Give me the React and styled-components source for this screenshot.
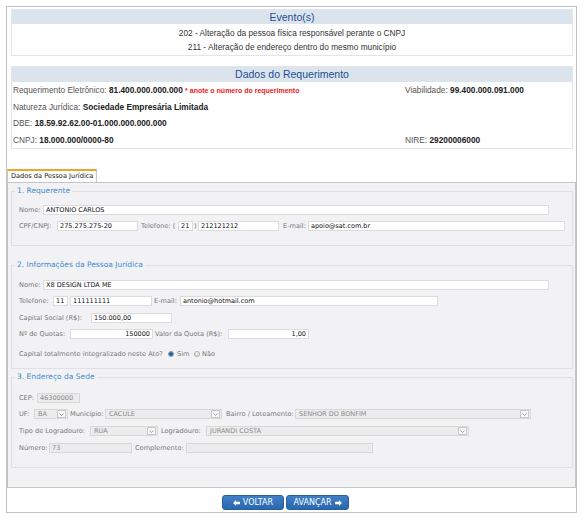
import React from 'react';
import styled, { createGlobalStyle } from 'styled-components';

const GlobalStyle = createGlobalStyle`
  html, body { margin: 0; padding: 0; background: #fff; }
  body { font-family: "Liberation Sans", Arial, sans-serif; }
  * { box-sizing: border-box; }
`;

const Frame = styled.div`
  margin: 6px 10px 0 6px;
  width: 571px;
  height: 507px;
  border: 1px solid #c2c2c2;
  display: flex;
  flex-direction: column;
`;

const Top = styled.div`
  padding: 2px 3px 0 4px;
`;

const InfoBox = styled.section`
  border: 1px solid #e0e6ec;
  background: #fff;
  margin-top: ${p => p.$mt || 0}px;
`;

const InfoHeader = styled.h2`
  margin: 0;
  height: ${p => p.$h || 14}px;
  line-height: ${p => p.$h || 14}px;
  background: #dbe4ed;
  color: #1f4f8d;
  font-size: 10.5px;
  font-weight: normal;
  text-align: center;
`;

const EventList = styled.div`
  padding: 2px 0 1px;
`;

const EventLine = styled.div`
  height: 14px;
  line-height: 14px;
  text-align: center;
  font-size: 8.3px;
  color: #333;
`;

const DataGrid = styled.div`
  display: grid;
  grid-template-columns: 392px 1fr;
  grid-auto-rows: 16.5px;
  align-items: center;
  padding-left: 1px;
`;

const DataCell = styled.div`
  font-size: 8.3px;
  color: #555;
  white-space: nowrap;
  b { color: #222; font-weight: bold; }
`;

const Warn = styled.span`
  color: #f01818;
  font-size: 7px;
  font-weight: bold;
`;

const Tabs = styled.div`
  display: flex;
  margin-top: 20px;
`;

const Tab = styled.div`
  height: 13px;
  padding: 0 3px;
  border: 1px solid #c8c8c8;
  border-bottom: none;
  border-top: 2px solid #f2a32c;
  background: #fff;
  font-family: "DejaVu Sans", Verdana, sans-serif;
  font-size: 6.6px;
  line-height: 10px;
  color: #222;
`;

const Panel = styled.div`
  border: 1px solid #c6c6c6;
  background: #f2f2f4;
  padding: 3px 2px 19px 3px;
  font-family: "DejaVu Sans", Verdana, sans-serif;
  font-size: 6.6px;
`;

const Fieldset = styled.fieldset`
  margin: ${p => p.$mt || 0}px 0 0 0;
  padding: ${p => p.$pt}px 7px ${p => p.$pb}px 7px;
  border: 1px solid #e0e0e2;
  min-width: 0;
`;

const Legend = styled.legend`
  margin-left: -4px;
  padding: 0 2px;
  height: 10px;
  line-height: 10px;
  font-size: 7.5px;
  color: #3d8bd2;
`;

const Row = styled.div`
  display: flex;
  align-items: center;
  height: 10px;
  margin-top: ${p => p.$mt || 0}px;
`;

const Label = styled.span`
  flex: none;
  width: ${p => (p.$w ? `${p.$w}px` : 'auto')};
  margin-left: ${p => p.$ml || 0}px;
  color: #777;
  white-space: nowrap;
`;

const Field = styled.input`
  width: ${p => p.$w}px;
  height: 10px;
  margin: 0 0 0 ${p => p.$ml || 0}px;
  padding: 0 2px;
  border: 1px solid ${p => (p.disabled ? '#d8d8d8' : '#dcdcdc')};
  border-radius: 0;
  background: ${p => (p.disabled ? '#ececec' : '#fff')};
  color: ${p => (p.disabled ? '#8a8a8a' : '#111')};
  font-family: "DejaVu Sans", Verdana, sans-serif;
  font-size: 6.5px;
  text-align: ${p => (p.$right ? 'right' : 'left')};
  outline: none;
  flex: none;
`;

const Select = styled.div`
  width: ${p => p.$w}px;
  height: 10px;
  flex: none;
  display: flex;
  align-items: center;
  justify-content: space-between;
  padding: 0 1px 0 3px;
  border: 1px solid #d8d8d8;
  background: #ececec;
  color: #8a8a8a;
  font-size: 6.5px;
`;

const SelectArrow = styled.span`
  width: 9px;
  height: 8px;
  border: 1px solid #c9c9c9;
  background: #f7f7f7;
  display: flex;
  align-items: center;
  justify-content: center;
`;

const Radio = styled.span`
  width: 6px;
  height: 6px;
  border-radius: 50%;
  border: 1px solid ${p => (p.$on ? '#7d8fa3' : '#a9a9a9')};
  background: ${p =>
    p.$on
      ? 'radial-gradient(circle, #17456f 0, #1f5f96 1.3px, #5c8fbe 2px, #dfe6ee 2.6px)'
      : 'linear-gradient(#f8f8f8, #dcdcdc)'};
  flex: none;
`;

const ButtonBar = styled.div`
  display: flex;
  justify-content: center;
  gap: 2px;
  padding: 7px 12px 0 0;
`;

const NavButton = styled.button`
  width: ${p => p.$w}px;
  height: 15px;
  padding: 0;
  display: flex;
  align-items: center;
  justify-content: center;
  gap: 3px;
  border: 1px solid #255f9e;
  border-radius: 3px;
  background: linear-gradient(#3f80c6, #2b67ad);
  color: #fff;
  font-family: "DejaVu Sans", Verdana, sans-serif;
  font-size: 8px;
  cursor: pointer;
`;

const Chevron = () => (
  <svg width="5" height="3" viewBox="0 0 5 3">
    <path d="M0.5 0.5 L2.5 2.5 L4.5 0.5" fill="none" stroke="#8c8c8c" strokeWidth="0.8" />
  </svg>
);

const ArrowLeft = () => (
  <svg width="7" height="6" viewBox="0 0 8 7">
    <path d="M0 3.5 L3.5 0 L3.5 2 L8 2 L8 5 L3.5 5 L3.5 7 Z" fill="#fff" />
  </svg>
);

const ArrowRight = () => (
  <svg width="7" height="6" viewBox="0 0 8 7">
    <path d="M8 3.5 L4.5 0 L4.5 2 L0 2 L0 5 L4.5 5 L4.5 7 Z" fill="#fff" />
  </svg>
);

const SelectBox = ({ w, value }) => (
  <Select $w={w}>
    <span>{value}</span>
    <SelectArrow>
      <Chevron />
    </SelectArrow>
  </Select>
);

export default function App() {
  return (
    <>
      <GlobalStyle />
      <Frame>
        <Top>
          <InfoBox>
            <InfoHeader>Evento(s)</InfoHeader>
            <EventList>
              <EventLine>202 - Alteração da pessoa física responsável perante o CNPJ</EventLine>
              <EventLine>211 - Alteração de endereço dentro do mesmo município</EventLine>
            </EventList>
          </InfoBox>
          <InfoBox $mt={10}>
            <InfoHeader $h={15}>Dados do Requerimento</InfoHeader>
            <DataGrid>
              <DataCell>
                Requerimento Eletrônico: <b>81.400.000.000.000</b>{' '}
                <Warn>* anote o número do requerimento</Warn>
              </DataCell>
              <DataCell>
                Viabilidade: <b>99.400.000.091.000</b>
              </DataCell>
              <DataCell>
                Natureza Jurídica: <b>Sociedade Empresária Limitada</b>
              </DataCell>
              <DataCell />
              <DataCell>
                DBE: <b>18.59.92.62.00-01.000.000.000.000</b>
              </DataCell>
              <DataCell />
              <DataCell>
                CNPJ: <b>18.000.000/0000-80</b>
              </DataCell>
              <DataCell>
                NIRE: <b>29200006000</b>
              </DataCell>
            </DataGrid>
          </InfoBox>
        </Top>

        <Tabs>
          <Tab>Dados da Pessoa Jurídica</Tab>
        </Tabs>

        <Panel>
          <Fieldset $pt={9} $pb={14}>
            <Legend>1. Requerente</Legend>
            <Row>
              <Label $w={24}>Nome:</Label>
              <Field $w={506} readOnly value="ANTONIO CARLOS" />
            </Row>
            <Row $mt={6}>
              <Label $w={38}>CPF/CNPJ:</Label>
              <Field $w={81} readOnly value="275.275.275-20" />
              <Label $ml={3} $w={37}>Telefone: (</Label>
              <Field $w={15} readOnly value="21" />
              <Label $ml={1} $w={4}>)</Label>
              <Field $w={81} readOnly value="212121212" />
              <Label $ml={4} $w={25}>E-mail:</Label>
              <Field $w={257} readOnly value="apoio@sat.com.br" />
            </Row>
          </Fieldset>

          <Fieldset $mt={14} $pt={10} $pb={9}>
            <Legend>2. Informações da Pessoa Jurídica</Legend>
            <Row>
              <Label $w={24}>Nome:</Label>
              <Field $w={506} readOnly value="X8 DESIGN LTDA ME" />
            </Row>
            <Row $mt={6}>
              <Label $w={34}>Telefone:</Label>
              <Field $w={15} readOnly value="11" />
              <Field $ml={2} $w={82} readOnly value="111111111" />
              <Label $ml={2} $w={26}>E-mail:</Label>
              <Field $w={258} readOnly value="antonio@hotmail.com" />
            </Row>
            <Row $mt={7}>
              <Label $w={72}>Capital Social (R$):</Label>
              <Field $w={81} readOnly value="150.000,00" />
            </Row>
            <Row $mt={6}>
              <Label $w={51}>Nº de Quotas:</Label>
              <Field $w={83} $right readOnly value="150000" />
              <Label $ml={2} $w={73}>Valor da Quota (R$):</Label>
              <Field $w={81} $right readOnly value="1,00" />
            </Row>
            <Row $mt={10}>
              <Label $w={149}>Capital totalmente integralizado neste Ato?</Label>
              <Radio $on />
              <Label $ml={3} $w={17}>Sim</Label>
              <Radio />
              <Label $ml={2}>Não</Label>
            </Row>
          </Fieldset>

          <Fieldset $mt={3} $pt={11} $pb={14}>
            <Legend>3. Endereço da Sede</Legend>
            <Row>
              <Label $w={18}>CEP:</Label>
              <Field $w={43} disabled readOnly value="46300000" />
            </Row>
            <Row $mt={6}>
              <Label $w={15}>UF:</Label>
              <SelectBox w={34} value="BA" />
              <Label $ml={2} $w={35}>Município:</Label>
              <SelectBox w={117} value="CACULE" />
              <Label $ml={4} $w={69}>Bairro / Loteamento:</Label>
              <SelectBox w={236} value="SENHOR DO BONFIM" />
            </Row>
            <Row $mt={7}>
              <Label $w={71}>Tipo de Logradouro:</Label>
              <SelectBox w={68} value="RUA" />
              <Label $ml={3} $w={45}>Logradouro:</Label>
              <SelectBox w={263} value="JURANDI COSTA" />
            </Row>
            <Row $mt={7}>
              <Label $w={30}>Número:</Label>
              <Field $w={83} disabled readOnly value="73" />
              <Label $ml={3} $w={51}>Complemento:</Label>
              <Field $w={187} disabled readOnly value="" />
            </Row>
          </Fieldset>
        </Panel>

        <ButtonBar>
          <NavButton $w={62} type="button">
            <ArrowLeft />
            VOLTAR
          </NavButton>
          <NavButton $w={63} type="button">
            AVANÇAR
            <ArrowRight />
          </NavButton>
        </ButtonBar>
      </Frame>
    </>
  );
}
